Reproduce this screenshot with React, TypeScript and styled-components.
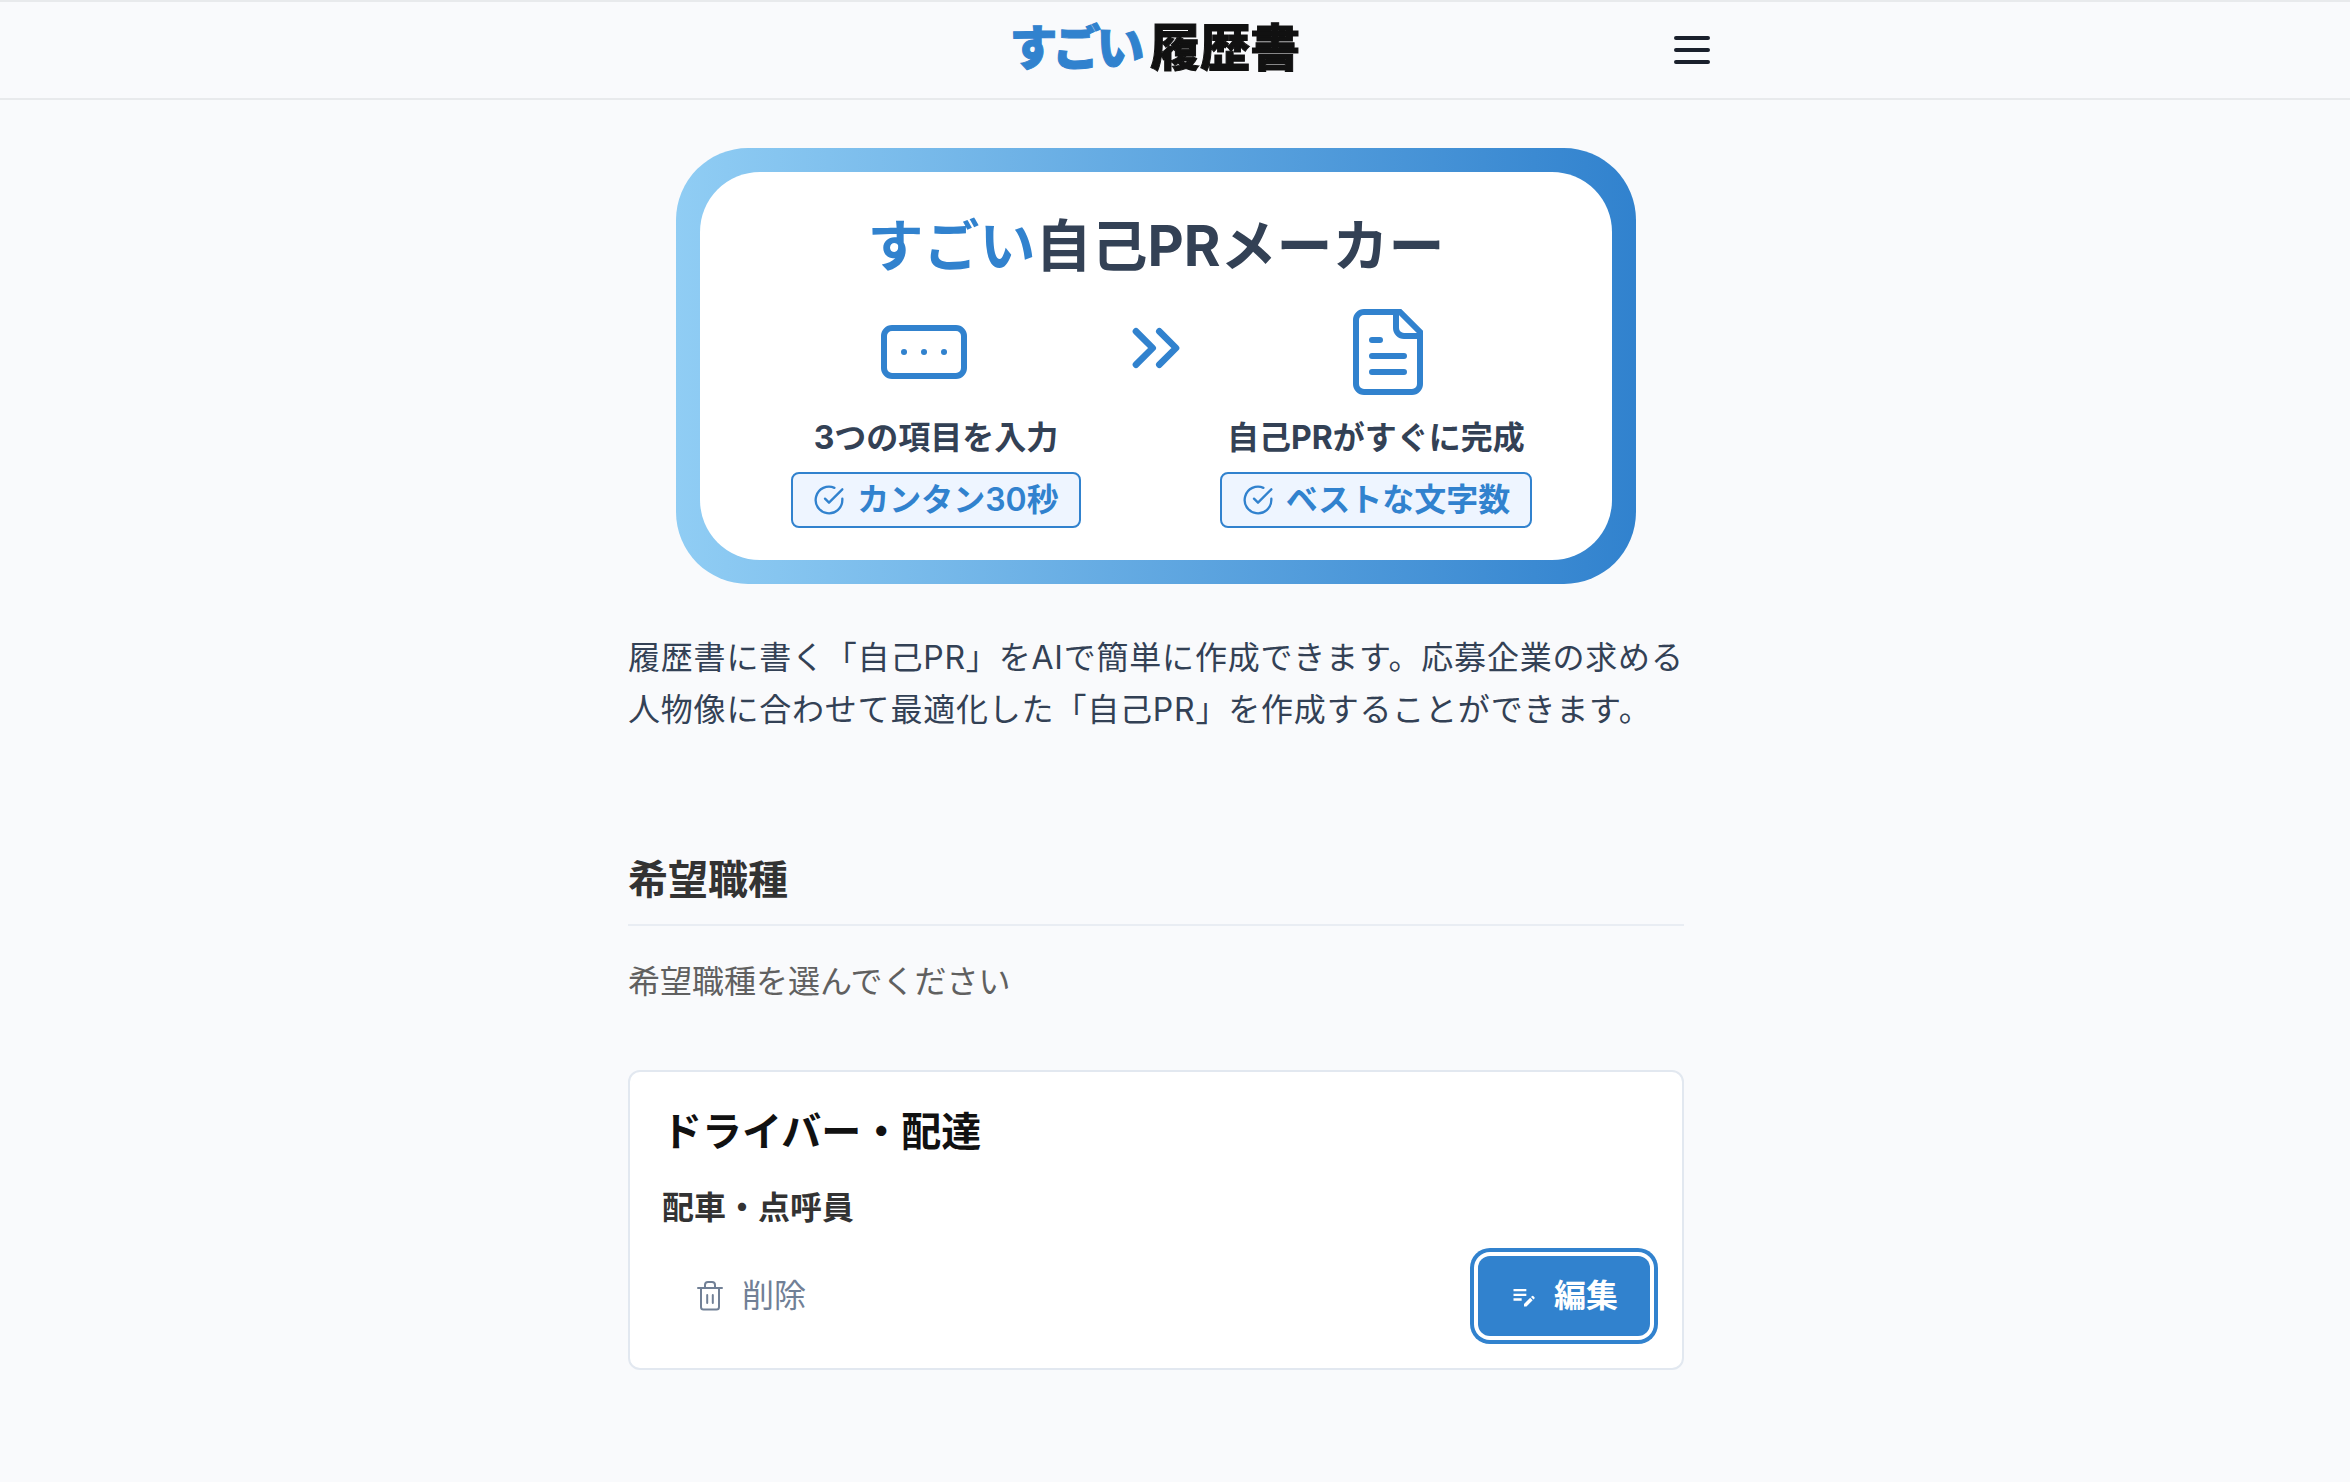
import React from "react";
import styled, { createGlobalStyle, css } from "styled-components";

const blue = "#3182ce";
const slate = "#334155";

const GlobalStyle = createGlobalStyle`
  *, *::before, *::after { box-sizing: border-box; }
  body {
    margin: 0;
    background: #f9fafc;
    color: #111;
    font-family: Inter, "Noto Sans CJK JP", sans-serif;
    font-size: 32px;
    line-height: 48px;
  }
  h1, h2, h3, h4, p { margin: 0; }
  button { font: inherit; cursor: pointer; }
`;

const Header = styled.header`
  border-top: 2px solid #e8eaec;
  border-bottom: 2px solid #e8eaec;
  padding-right: 38px;
`;

const HeaderInner = styled.div`
  display: grid;
  grid-template-columns: 1fr auto 1fr;
  align-items: center;
  max-width: 1120px;
  height: 96px;
  margin: 0 auto;
`;

const Logo = styled.a`
  grid-column: 2;
  display: flex;
  align-items: center;
  gap: 6px;
  padding-bottom: 12px;
  color: #111;
  font-family: "Noto Sans CJK JP", sans-serif;
  font-size: 50px;
  font-weight: 900;
  line-height: 72px;
  text-decoration: none;
  -webkit-text-stroke: 1px currentColor;
`;

const LogoKana = styled.span`
  color: ${blue};
  font-size: 48px;
  font-feature-settings: "palt";
`;

const MenuButton = styled.button`
  justify-self: end;
  display: flex;
  padding: 0;
  border: 0;
  background: none;
  color: #1a202c;
`;

const Page = styled.main`
  padding: 48px 38px 112px 0;
`;

const Column = styled.div`
  width: 100%;
  max-width: 1056px;
  margin: 0 auto;
`;

const Hero = styled.section`
  max-width: 960px;
  margin: 0 auto;
  padding: 24px;
  border-radius: 72px;
  background: linear-gradient(90deg, #90cdf4, ${blue});
`;

const HeroPanel = styled.div`
  padding: 32px 16px;
  border-radius: 60px;
  background: #fff;
`;

const HeroTitle = styled.h1`
  color: ${slate};
  font-size: 56px;
  font-weight: 700;
  line-height: 84px;
  text-align: center;
`;

const Accent = styled.span`
  color: ${blue};
`;

const HeroIcons = styled.div`
  display: flex;
  justify-content: center;
  gap: 144px;
  margin-top: 16px;
  color: ${blue};
`;

const HeroSteps = styled.div`
  display: grid;
  grid-template-columns: 1fr 1fr;
  margin-top: 14px;
`;

const Step = styled.div`
  display: flex;
  flex-direction: column;
  align-items: center;
  gap: 10px;
`;

const StepLabel = styled.p`
  color: ${slate};
  font-weight: 700;
`;

const Badge = styled.span`
  display: flex;
  align-items: center;
  gap: 12px;
  height: 56px;
  padding: 0 20px;
  border: 2px solid ${blue};
  border-radius: 8px;
  background: #eef5ff;
  color: ${blue};
  font-weight: 600;
`;

const Lead = styled.p`
  margin-top: 48px;
  color: ${slate};
  line-height: 52px;
  letter-spacing: 0.025em;
`;

const Section = styled.section`
  margin-top: 112px;
`;

const SectionTitle = styled.h2`
  padding-bottom: 12px;
  border-bottom: 2px solid #e9edf3;
  color: #333;
  font-size: 40px;
  font-weight: 700;
  line-height: 64px;
`;

const Hint = styled.p`
  margin-top: 32px;
  color: #606060;
`;

const JobCard = styled.article`
  margin-top: 64px;
  padding: 30px 32px 32px;
  border: 2px solid #e2e8f0;
  border-radius: 12px;
  background: #fff;
`;

const JobCategory = styled.h3`
  font-size: 40px;
  font-weight: 700;
  line-height: 60px;
`;

const JobName = styled.h4`
  margin-top: 22px;
  color: #333;
  font-size: 32px;
  font-weight: 700;
`;

const Actions = styled.div`
  display: flex;
  justify-content: space-between;
  margin-top: 24px;
`;

const ActionButton = styled.button<{ $primary?: boolean }>`
  display: flex;
  align-items: center;
  gap: 16px;
  height: 80px;
  padding: 0 32px;
  border: 0;
  border-radius: 12px;
  background: none;
  color: #718096;
  ${(p) =>
    p.$primary &&
    css`
      background: ${blue};
      color: #fff;
      font-weight: 700;
      box-shadow: 0 0 0 4px #fff, 0 0 0 8px ${blue};
    `}
`;

const CheckIcon = () => (
  <svg width="32" height="32" viewBox="0 0 24 24" fill="none" stroke="currentColor" strokeWidth="1.75" strokeLinecap="round" strokeLinejoin="round" aria-hidden="true">
    <path d="M22 11.08V12a10 10 0 1 1-5.93-9.14" />
    <path d="M22 4 12 14.01l-3-3" />
  </svg>
);

const InputIcon = () => (
  <svg width="96" height="96" viewBox="0 0 24 24" fill="none" stroke="currentColor" strokeWidth="1.5" aria-hidden="true">
    <rect x="2" y="6" width="20" height="12" rx="2" />
    <path d="M7 12h.01M12 12h.01M17 12h.01" strokeLinecap="round" />
  </svg>
);

const ArrowsIcon = () => (
  <svg width="80" height="88" viewBox="0 0 24 26.4" fill="none" stroke="currentColor" strokeWidth="2" strokeLinecap="round" strokeLinejoin="round" aria-hidden="true">
    <path d="m6 18.2 5-5-5-5M13 18.2l5-5-5-5" />
  </svg>
);

const DocumentIcon = () => (
  <svg width="96" height="96" viewBox="0 0 24 24" fill="none" stroke="currentColor" strokeWidth="1.5" aria-hidden="true">
    <path d="M15 2H6a2 2 0 0 0-2 2v16a2 2 0 0 0 2 2h12a2 2 0 0 0 2-2V7z" />
    <path d="M14 2v4a2 2 0 0 0 2 2h4" />
    <path d="M8 9h2M8 13h8M8 17h8" strokeLinecap="round" />
  </svg>
);

const MenuIcon = () => (
  <svg width="44" height="44" viewBox="0 0 44 44" stroke="currentColor" strokeWidth="4" strokeLinecap="round" aria-hidden="true">
    <path d="M4 10h32M4 22h32M4 34h32" />
  </svg>
);

const TrashIcon = () => (
  <svg width="32" height="32" viewBox="0 0 32 32" fill="none" stroke="currentColor" strokeWidth="2" strokeLinecap="round" strokeLinejoin="round" aria-hidden="true">
    <path d="M4 8h24M11 8V5a3 3 0 0 1 3-3h4a3 3 0 0 1 3 3v3M7 8v19a2.5 2.5 0 0 0 2.5 2.5h13A2.5 2.5 0 0 0 25 27V8M13.2 15v8M18.8 15v8" />
  </svg>
);

const EditNoteIcon = () => (
  <svg width="28" height="28" viewBox="0 0 24 24" fill="currentColor" aria-hidden="true">
    <path d="M3 10h11v2H3v-2zm0-2h11V6H3v2zm0 8h7v-2H3v2zm15.01-3.13.71-.71a.996.996 0 0 1 1.41 0l.71.71c.39.39.39 1.02 0 1.41l-.71.71-2.12-2.12zm-.71.71-5.3 5.3V21h2.12l5.3-5.3-2.12-2.12z" />
  </svg>
);

export default function App() {
  return (
    <>
      <GlobalStyle />
      <Header>
        <HeaderInner>
          <Logo href="#">
            <LogoKana>すごい</LogoKana>
            <span>履歴書</span>
          </Logo>
          <MenuButton type="button" aria-label="メニュー">
            <MenuIcon />
          </MenuButton>
        </HeaderInner>
      </Header>
      <Page>
        <Column>
          <Hero>
            <HeroPanel>
              <HeroTitle>
                <Accent>すごい</Accent>自己PRメーカー
              </HeroTitle>
              <HeroIcons>
                <InputIcon />
                <ArrowsIcon />
                <DocumentIcon />
              </HeroIcons>
              <HeroSteps>
                <Step>
                  <StepLabel>3つの項目を入力</StepLabel>
                  <Badge>
                    <CheckIcon />
                    カンタン30秒
                  </Badge>
                </Step>
                <Step>
                  <StepLabel>自己PRがすぐに完成</StepLabel>
                  <Badge>
                    <CheckIcon />
                    ベストな文字数
                  </Badge>
                </Step>
              </HeroSteps>
            </HeroPanel>
          </Hero>
          <Lead>
            履歴書に書く「自己PR」をAIで簡単に作成できます。応募企業の求める人物像に合わせて最適化した「自己PR」を作成することができます。
          </Lead>
          <Section>
            <SectionTitle>希望職種</SectionTitle>
            <Hint>希望職種を選んでください</Hint>
            <JobCard>
              <JobCategory>ドライバー・配達</JobCategory>
              <JobName>配車・点呼員</JobName>
              <Actions>
                <ActionButton type="button">
                  <TrashIcon />
                  削除
                </ActionButton>
                <ActionButton type="button" $primary>
                  <EditNoteIcon />
                  編集
                </ActionButton>
              </Actions>
            </JobCard>
          </Section>
        </Column>
      </Page>
    </>
  );
}
